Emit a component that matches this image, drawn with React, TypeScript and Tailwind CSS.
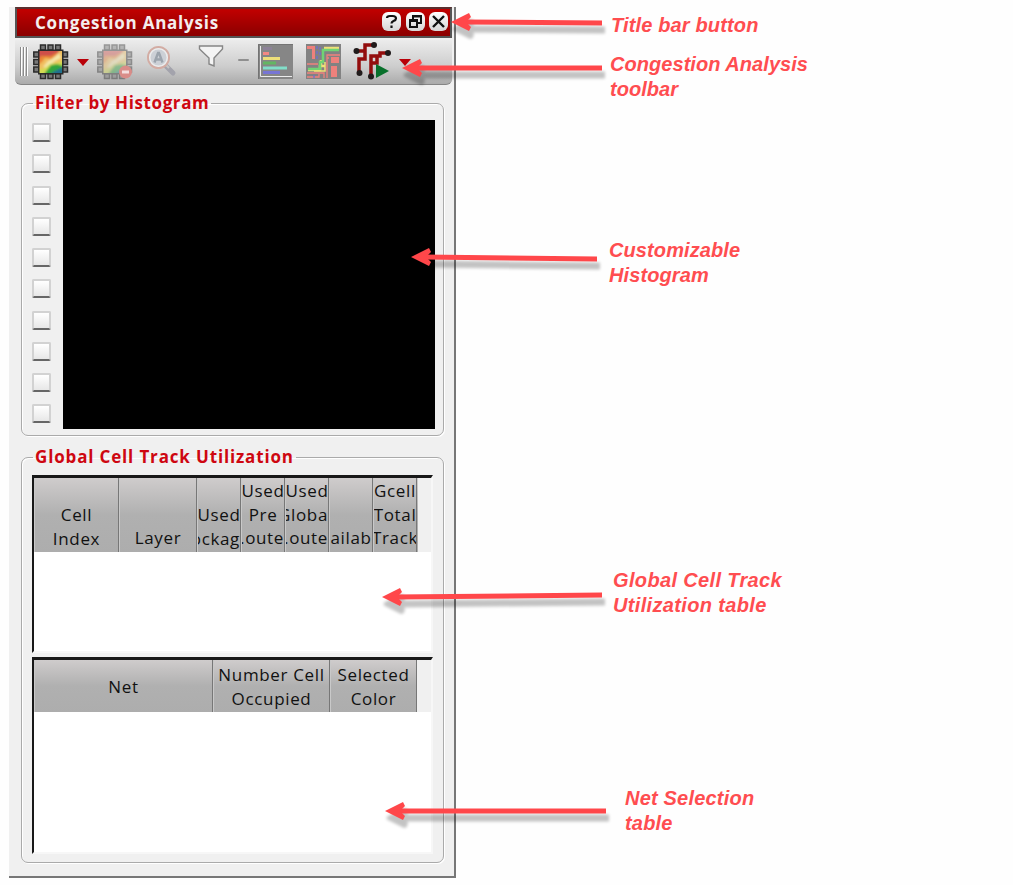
import React from "react";

type Kids = { children: React.ReactNode };

const PINS = [10, 17.5, 25];

function Chip({ faded = false }: { faded?: boolean }) {
  const id = faded ? "heatFaded" : "heat";
  return (
    <svg viewBox="0 0 36 36" className="h-9 w-9 shrink-0">
      <defs>
        <clipPath id={id}>
          <rect x="6.500" y="7" width="22.500" height="22" />
        </clipPath>
        <filter id={id + "Blur"}>
          <feGaussianBlur stdDeviation="0.8" />
        </filter>
      </defs>
      <g opacity={faded ? 0.42 : 1}>
        {PINS.map((p) => (
          <g key={p} fill="#777" stroke="#2b2b2b" strokeWidth="1.500">
            <rect x={p - 2.5} y="1" width="5" height="5" />
            <rect x={p - 2.5} y="29.500" width="5" height="5" />
            <rect x="0.800" y={p - 2} width="5" height="5" />
            <rect x="29.500" y={p - 2} width="5" height="5" />
          </g>
        ))}
        <rect x="5" y="5.500" width="25.500" height="25" fill="#2b2b2b" />
        <g clipPath={`url(#${id})`}>
          <g filter={`url(#${id}Blur)`}>
            <rect x="4" y="4" width="28" height="28" fill="#f0c060" />
            <path d="M4 4H28L24 11L18 14L12 13L9 17L4 20Z" fill="#cf5048" />
            <path d="M24 11L18 15L12 14L9 18L5 21V16L8 12L18 12L25 8Z" fill="#e98736" />
            <path d="M26 9L19 15L15 17L10 23L14 24L22 17L28 14Z" fill="#f4e7a8" />
            <path d="M5 26L12 24L17 20L24 19L31 16V32H5Z" fill="#d5dc52" />
            <path d="M10 32L14 26L18 21L24 20L31 22V32Z" fill="#32a53c" />
            <path d="M16 32L20 28L30 23V32Z" fill="#236e91" />
          </g>
        </g>
      </g>
      {faded && (
        <g>
          <circle cx="28.500" cy="28" r="6.500" fill="#d98c88" />
          <rect x="25" y="26.500" width="7" height="3" fill="#f4dede" />
        </g>
      )}
    </svg>
  );
}

function Down() {
  return (
    <svg viewBox="0 0 12 7" className="h-[7px] w-3 shrink-0">
      <path d="M0 0H12L6 7Z" fill="#b90008" />
    </svg>
  );
}

function Search() {
  return (
    <svg viewBox="0 0 32 32" className="h-8 w-8 shrink-0">
      <path d="M20 21L27 28" stroke="#a3a3ac" strokeWidth="5" strokeLinecap="round" />
      <path d="M19 19L23 23" stroke="#c4c4c4" strokeWidth="2" />
      <circle cx="12.500" cy="12.500" r="10.500" fill="#ccd0d6" stroke="#d3aca3" strokeWidth="2" />
      <circle cx="12.500" cy="12.500" r="8.800" fill="none" stroke="#ececec" strokeWidth="1.500" />
      <path d="M8.500 17.500L12 8H13L16.500 17.500M10 14.500H15" fill="none" stroke="#9ca4ad" strokeWidth="2.400" />
    </svg>
  );
}

function Funnel() {
  return (
    <svg viewBox="0 0 26 24" className="h-6 w-[26px] shrink-0">
      <path d="M1.500 1H24.500V4L16 13V21L11 19V13L1.500 4Z" fill="#f4f4f4" stroke="#858585" strokeWidth="1.400" />
    </svg>
  );
}

function Bars() {
  return (
    <svg viewBox="0 0 35 35" className="size-[35px] shrink-0">
      <rect width="35" height="35" fill="#868686" />
      <path d="M0.500 35V0.500H35" stroke="#747474" fill="none" />
      <path d="M2.500 2V32.500H34" stroke="#ececec" fill="none" />
      <rect x="5" y="3" width="9" height="3" fill="#8d8298" />
      <rect x="5" y="8" width="6" height="3" fill="#f48882" />
      <rect x="5" y="13" width="17" height="3" fill="#eddf79" />
      <rect x="5" y="17.500" width="13" height="3" fill="#63b663" />
      <rect x="5" y="22.500" width="24" height="3" fill="#82dec9" />
      <rect x="5" y="27" width="17" height="3" fill="#7775d5" />
    </svg>
  );
}

function Routing() {
  return (
    <svg viewBox="0 0 35 35" className="size-[35px] shrink-0">
      <rect width="35" height="35" fill="#828282" />
      <path d="M1 2H9V15H6V5H1ZM25 13H33V19H25ZM25 22H31V33H25Z" fill="#ee817c" />
      <path d="M1 20H12M1 29H18V34M1 33H13V30M21 34V11H34M23 14H21V29" stroke="#ef817d" strokeWidth="1.300" fill="none" />
      <path d="M18 4H33M2 26H14V22H19M15 21V16" stroke="#efe179" strokeWidth="2.500" fill="none" />
      <path d="M11 2V17M8 31V35M14 3V13" stroke="#706ed0" strokeWidth="1.300" strokeDasharray="3 2" />
      <path d="M33 6H17V18H14V25H2" stroke="#70d474" strokeWidth="2.500" fill="none" />
      <path d="M19 18V27H8" stroke="#efdf75" strokeWidth="1.500" fill="none" />
    </svg>
  );
}

function Nets() {
  return (
    <svg viewBox="0 0 40 40" className="size-10 shrink-0">
      <path d="M3 10H11M20 4H12V18H6V32" stroke="#930d0d" strokeWidth="3.500" fill="none" />
      <path d="M35 12H27V15H18V35M18 22H24V15" stroke="#930d0d" strokeWidth="3.500" fill="none" />
      <g fill="#211b1b">
        <circle cx="3.500" cy="10" r="3" />
        <circle cx="21" cy="4" r="3" />
        <circle cx="35" cy="12" r="3" />
        <circle cx="6.500" cy="32" r="3" />
        <circle cx="18" cy="35.500" r="3" />
      </g>
      <path d="M23 23L36 30L23 37Z" fill="#08702b" />
    </svg>
  );
}

function TitleButton({ children }: Kids) {
  return (
    <button className="flex h-[19px] w-[19px] items-center justify-center rounded-[6px] bg-linear-to-b from-white to-[#d6d6d6]">
      <svg viewBox="0 0 19 19" className="h-[19px] w-[19px]" fill="none" stroke="#111" strokeWidth="2.200">
        {children}
      </svg>
    </button>
  );
}

function Group({ title, className, legend, children }: Kids & { title: string; className: string; legend: string }) {
  return (
    <fieldset className={"ml-[6px] w-[423px] min-w-0 rounded-[7px] border border-[#aaa] shadow-[inset_1px_1px_0_#fff,1px_1px_0_#fff] " + className}>
      <legend className={"ml-[11px] h-[20px] whitespace-nowrap px-[2px] text-[17px] leading-[20px] font-bold text-[#ce0711] " + legend}>{title}</legend>
      {children}
    </fieldset>
  );
}

type Line = string | { text: string; align: string };

function Head({ lines, className }: { lines: Line[]; className: string }) {
  return (
    <div className={"flex h-full shrink-0 flex-col border-r border-[#777] pl-px shadow-[inset_1px_0_0_#c9c9c9] " + className}>
      {lines.map((l, i) => {
        const text = typeof l === "string" ? l : l.text;
        const align = typeof l === "string" ? "justify-center" : l.align;
        return (
          <div key={i} className={"flex h-[23.5px] shrink-0 overflow-hidden whitespace-nowrap leading-[23px] " + align}>
            <span className="shrink-0">{text}</span>
          </div>
        );
      })}
    </div>
  );
}

const ARROWS = [
  { tip: [451, 22], end: [602, 23] },
  { tip: [402, 68], end: [602, 68] },
  { tip: [411, 257], end: [597, 259] },
  { tip: [382, 597], end: [602, 595] },
  { tip: [385, 811], end: [606, 811] },
];

function ArrowShape({ tip, end }: { tip: number[]; end: number[] }) {
  const [x, y] = tip;
  return (
    <g>
      <path d={`M${x + 12} ${y}L${end[0]} ${end[1]}`} strokeWidth="5" />
      <path d={`M${x} ${y}L${x + 18} ${y - 9}L${x + 20} ${y - 5}L${x + 15} ${y}L${x + 20} ${y + 5}L${x + 18} ${y + 9}Z`} stroke="none" />
    </g>
  );
}

function Note({ className, children }: Kids & { className: string }) {
  return (
    <p className={"absolute whitespace-nowrap font-['Liberation_Sans',Arial,sans-serif] text-[20px] leading-[25px] font-bold text-[#ff4d50] italic " + className}>
      {children}
    </p>
  );
}

const HEAD_BG = "bg-linear-to-b from-[#cfcccc] via-[#b0b0b0] via-50% to-[#adadad]";
const FRAME = "ml-[10px] w-[401px] border-t-[3px] border-r-2 border-b-2 border-l-2 border-t-[#181818] border-r-[#f7f7f7] border-b-[#f7f7f7] border-l-[#181818] bg-white";
const ROUTED = { text: ".oute", align: "justify-end" };

export default function App() {
  return (
    <div className="relative h-[885px] w-[1013px] overflow-hidden bg-[#fefefe] pt-[7px] pl-[9px] font-['Open_Sans','Noto_Sans',sans-serif]">
      <section className="flex h-[871px] w-[447px] flex-col border-r-2 border-b-2 border-[#777] bg-[#f0f0f0] pl-[6px]">
        <header className="flex h-[31px] w-[437px] shrink-0 items-center border-2 border-t-[#5b3030] border-r-[#555] border-b-[#555] border-l-[#555] bg-linear-to-b from-[#c20000] to-[#8b0000] pr-[2px] pl-[18px]">
          <h1 className="mr-auto text-[17px] leading-[22px] font-bold tracking-[0.76px] whitespace-nowrap text-[#f4eeee]">Congestion Analysis</h1>
          <div className="-mt-[3px] flex gap-[4.500px]">
            <TitleButton>
              <path d="M5 6Q5 4 8 4H10.500Q14 4 14 6.500Q14 8 11.500 9Q9.500 10 9.500 11.500M9.500 13.500V16" />
            </TitleButton>
            <TitleButton>
              <path d="M7 8V4H15V11H12M4 8H11V15H4ZM6.500 4.500H15M4 9H11" strokeWidth="2" />
            </TitleButton>
            <TitleButton>
              <path d="M4 4L15 15M15 4L4 15" strokeWidth="2.400" />
            </TitleButton>
          </div>
        </header>
        <div className="mt-[2px] flex h-[45px] w-[437px] shrink-0 items-center rounded-b-[6px] border-b border-[#858585] bg-linear-to-b from-[#ececec] via-[#cdcdcd] via-60% to-[#ababab] pl-[5px]">
          <div className="mt-[-2px] flex gap-[1px]">
            <i className="h-[29px] w-[2px] border-l border-[#8a8a8a] bg-white" />
            <i className="h-[29px] w-[2px] border-l border-[#8a8a8a] bg-white" />
            <i className="h-[29px] w-[2px] border-l border-[#8a8a8a] bg-white" />
          </div>
          <div className="-mt-px ml-[5px] flex"><Chip /></div>
          <div className="ml-[8px] flex"><Down /></div>
          <div className="-mt-px ml-[8px] flex"><Chip faded /></div>
          <div className="-mt-[2px] ml-[13px] flex"><Search /></div>
          <div className="-mt-[11px] ml-[20px] flex"><Funnel /></div>
          <i className="-mt-[5px] ml-[14px] h-[2px] w-[11px] rounded-full bg-[#8f8f8f]" />
          <div className="-mt-px ml-[9px] flex"><Bars /></div>
          <div className="-mt-px ml-[13px] flex"><Routing /></div>
          <div className="-mt-[2px] ml-[12px] flex"><Nets /></div>
          <div className="ml-[6px] flex"><Down /></div>
        </div>
        <Group title="Filter by Histogram" legend="tracking-[0.6px]" className="mt-[8px] h-[343px]">
          <div className="mt-[7px] flex pl-[10px]">
            <div className="flex h-[309px] w-[31px] flex-col gap-[12.250px] pt-[3px]">
              {Array.from({ length: 10 }, (_, i) => (
                <label key={i} className="block h-[19px] w-[19px] shrink-0">
                  <input type="checkbox" className="block h-[19px] w-[19px] appearance-none rounded-[2px] border-x-2 border-t-2 border-b-2 border-x-[#d2d2d2] border-t-[#d2d2d2] border-b-[#666] bg-linear-to-b from-white to-[#e7e7e7]" />
                </label>
              ))}
            </div>
            <div className="h-[309px] w-[372px] bg-black" />
          </div>
        </Group>
        <Group title="Global Cell Track Utilization" legend="tracking-[0.84px]" className="mt-[11px] h-[416px]">
          <div className="text-[17px] tracking-[0.65px] text-[#111]">
            <div className={FRAME + " mt-[8px] h-[178px]"}>
              <div className="h-[74px] bg-[#f0f0f0]">
                <div className={"flex h-full w-[384px] " + HEAD_BG}>
                  <Head className="w-[85px] pt-[25px]" lines={["Cell", "Index"]} />
                  <Head className="w-[78px] pt-[48px]" lines={["Layer"]} />
                  <Head className="w-[44px] pt-[25px]" lines={["Used", { text: "ockag", align: "justify-end" }]} />
                  <Head className="w-[44px] pt-px" lines={["Used", "Pre", ROUTED]} />
                  <Head className="w-[44px] pt-px" lines={["Used", { text: "Globa", align: "justify-end" }, ROUTED]} />
                  <Head className="w-[44px] pt-[48px]" lines={["ailab"]} />
                  <Head className="w-[44px] pt-px" lines={["Gcell", "Total", "Track"]} />
                </div>
              </div>
            </div>
            <div className={FRAME + " mt-[4px] h-[197px]"}>
              <div className="h-[52px] bg-[#f0f0f0]">
                <div className={"flex h-full w-[383px] " + HEAD_BG}>
                  <Head className="w-[179px] pt-[15px]" lines={["Net"]} />
                  <Head className="w-[117px] pt-[3px]" lines={["Number Cell", "Occupied"]} />
                  <Head className="w-[87px] pt-[3px]" lines={["Selected", "Color"]} />
                </div>
              </div>
            </div>
          </div>
        </Group>
      </section>
      <svg viewBox="0 0 1013 885" className="pointer-events-none absolute inset-0 h-[885px] w-[1013px]">
        <defs>
          <filter id="soft" x="0" y="0" width="1013" height="885" filterUnits="userSpaceOnUse">
            <feMorphology operator="dilate" radius="1" />
            <feGaussianBlur stdDeviation="1.6" />
          </filter>
        </defs>
        <g transform="translate(2 7)" fill="#000" stroke="#000" opacity="0.23" filter="url(#soft)">
          {ARROWS.map((a) => <ArrowShape key={a.tip[1]} {...a} />)}
        </g>
        <g fill="#ff474a" stroke="#ff474a">
          {ARROWS.map((a) => <ArrowShape key={a.tip[1]} {...a} />)}
        </g>
      </svg>
      <Note className="top-[13px] left-[611px] tracking-[0.15px]">Title bar button</Note>
      <Note className="top-[52px] left-[610px] tracking-[0.05px]">Congestion Analysis<br />toolbar</Note>
      <Note className="top-[238px] left-[609px] tracking-[0.1px]">Customizable<br />Histogram</Note>
      <Note className="top-[568px] left-[613px] tracking-[0.35px]">Global Cell Track<br />Utilization table</Note>
      <Note className="top-[786px] left-[625px] tracking-[0.2px]">Net Selection<br />table</Note>
    </div>
  );
}
